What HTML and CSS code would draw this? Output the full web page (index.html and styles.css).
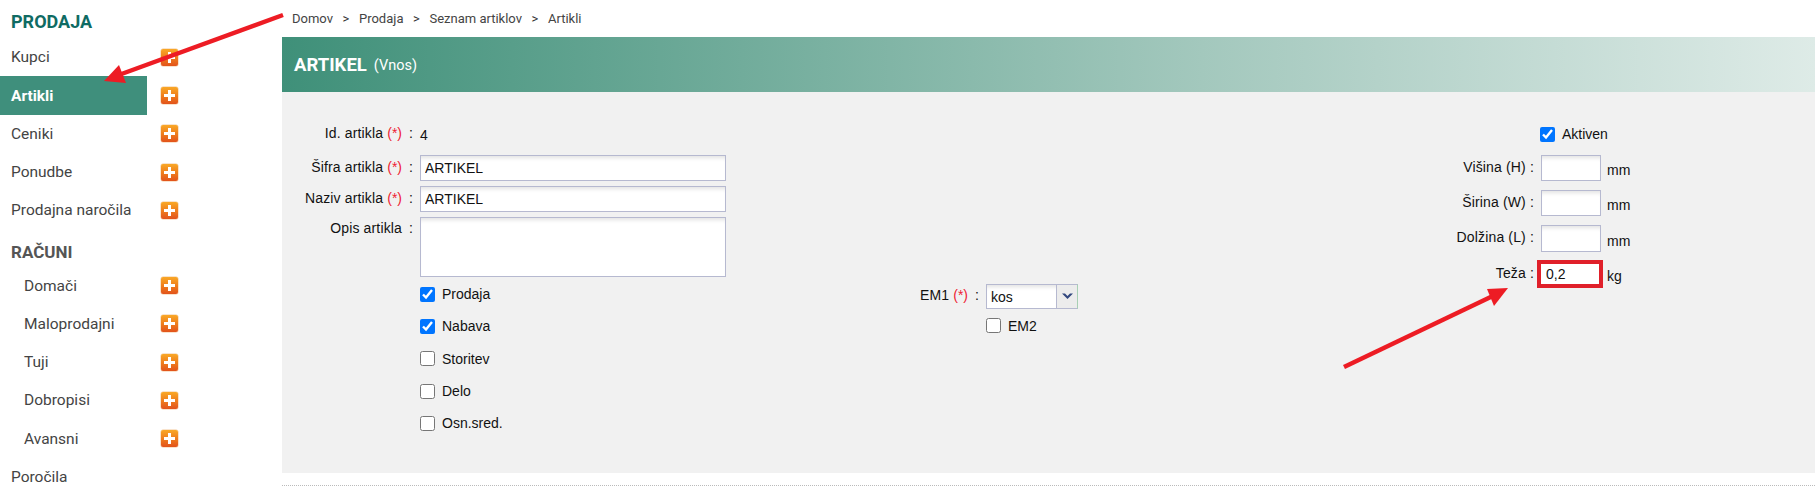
FILE: index.html
```html
<!DOCTYPE html>
<html lang="sl">
<head>
<meta charset="utf-8">
<title>Artikel</title>
<link rel="stylesheet" href="styles.css">
</head>
<body>
<div class="app">
  <aside class="sidebar">
    <h2 class="heading heading-main">PRODAJA</h2>
    <ul class="menu">
      <li class="item"><a class="link">Kupci</a><span class="plus"></span></li>
      <li class="item active"><a class="link">Artikli</a><span class="plus"></span></li>
      <li class="item"><a class="link">Ceniki</a><span class="plus"></span></li>
      <li class="item"><a class="link">Ponudbe</a><span class="plus"></span></li>
      <li class="item"><a class="link">Prodajna naročila</a><span class="plus"></span></li>
    </ul>
    <h2 class="heading heading-sub">RAČUNI</h2>
    <ul class="menu">
      <li class="item sub"><a class="link">Domači</a><span class="plus"></span></li>
      <li class="item sub"><a class="link">Maloprodajni</a><span class="plus"></span></li>
      <li class="item sub"><a class="link">Tuji</a><span class="plus"></span></li>
      <li class="item sub"><a class="link">Dobropisi</a><span class="plus"></span></li>
      <li class="item sub"><a class="link">Avansni</a><span class="plus"></span></li>
      <li class="item"><a class="link">Poročila</a></li>
    </ul>
  </aside>
  <main class="main">
    <nav class="crumbs"><span>Domov</span><span class="sep">&gt;</span><span>Prodaja</span><span class="sep">&gt;</span><span>Seznam artiklov</span><span class="sep">&gt;</span><span>Artikli</span></nav>
    <header class="title"><strong>ARTIKEL</strong><small>(Vnos)</small></header>
    <form class="panel">
      <div class="col col-left">
        <div class="row row-id"><span class="lbl">Id. artikla <em>(*)</em></span><span class="colon">:</span><span class="value">4</span></div>
        <div class="row"><span class="lbl">Šifra artikla <em>(*)</em></span><span class="colon">:</span><input class="input wide" type="text" value="ARTIKEL"></div>
        <div class="row"><span class="lbl">Naziv artikla <em>(*)</em></span><span class="colon">:</span><input class="input wide" type="text" value="ARTIKEL"></div>
        <div class="row row-top"><span class="lbl">Opis artikla</span><span class="colon">:</span><textarea class="input wide area"></textarea></div>
        <div class="checks">
          <label class="check"><input type="checkbox" checked>Prodaja</label>
          <label class="check"><input type="checkbox" checked>Nabava</label>
          <label class="check"><input type="checkbox">Storitev</label>
          <label class="check"><input type="checkbox">Delo</label>
          <label class="check"><input type="checkbox">Osn.sred.</label>
        </div>
      </div>
      <div class="col col-mid">
        <div class="row"><span class="lbl">EM1 <em>(*)</em></span><span class="colon">:</span>
          <span class="combo"><span class="combo-value">kos</span><span class="combo-btn"><svg width="13" height="8" viewBox="0 0 13 8"><path d="M1 1.5h3l2.500 2.500 2.500-2.500h3L6.500 7z" fill="#33487f"/></svg></span></span>
        </div>
        <label class="check check-em"><input type="checkbox">EM2</label>
      </div>
      <div class="col col-right">
        <label class="check check-active"><input type="checkbox" checked>Aktiven</label>
        <div class="dim"><span class="dim-lbl">Višina (H) :</span><input class="input small" type="text"><span class="unit">mm</span></div>
        <div class="dim"><span class="dim-lbl">Širina (W) :</span><input class="input small" type="text"><span class="unit">mm</span></div>
        <div class="dim dim-l"><span class="dim-lbl">Dolžina (L) :</span><input class="input small tall" type="text"><span class="unit">mm</span></div>
        <div class="dim dim-w"><span class="dim-lbl">Teža :</span><input class="marked" type="text" value="0,2"><span class="unit">kg</span></div>
      </div>
    </form>
    <div class="rule"></div>
  </main>
  <svg class="arrows" width="1815" height="494" viewBox="0 0 1815 494" aria-hidden="true">
    <g fill="#ed1c24" stroke="#ed1c24">
      <path d="M283 15L116 76" stroke-width="4.500" fill="none"/>
      <path d="M104 81l15-16 7 18z" stroke="none"/>
      <path d="M1344 367L1497 294" stroke-width="4.500" fill="none"/>
      <path d="M1508 288l-21 1 7 17z" stroke="none"/>
    </g>
  </svg>
</div>
</body>
</html>
```

FILE: styles.css
```css
* { box-sizing: border-box; }
html, body { margin: 0; padding: 0; height: 494px; overflow: hidden; background: #fff; }
.app { position: relative; display: flex; height: 494px; overflow: hidden; }

.sidebar { width: 282px; flex: none; font-family: Roboto, sans-serif; font-size: 15.500px; color: #444; }
.heading { margin: 0; font-weight: 700; padding-left: 11px; }
.heading-main { height: 38.2px; padding-top: 12px; line-height: 19px; color: #0f6b63; font-size: 18px; }
.heading-sub { height: 37px; padding-top: 14px; line-height: 19px; color: #555; font-size: 17px; }
.menu { list-style: none; margin: 0; padding: 0; }
.item { height: 38.25px; display: flex; align-items: center; }
.link { width: 147px; height: 100%; display: flex; align-items: center; padding-left: 11px; flex: none; }
.item.sub .link { padding-left: 24px; }
.item.active .link { background: #3f8f7c; color: #fff; font-weight: 700; }
.plus { position: relative; width: 17px; height: 17px; margin-left: 14px; border-radius: 2px; background: linear-gradient(#f9a826, #ee7a1c 55%, #e2531b); box-shadow: 0 0 0 0.5px #f3c79a; }
.plus::before, .plus::after { content: ""; position: absolute; background: #fff; }
.plus::before { left: 3px; right: 3px; top: 7px; height: 3px; }
.plus::after { top: 3px; bottom: 3px; left: 7px; width: 3px; }

.main { flex: 1; min-width: 0; }
.crumbs { height: 37px; padding: 10px 0 0 10px; display: flex; font-family: Roboto, sans-serif; font-size: 13px; line-height: 17px; color: #444; }
.sep { width: 26px; text-align: center; color: #333; }
.title { height: 55px; padding-left: 12px; display: flex; align-items: center; gap: 7px; color: #fff; font-family: Roboto, sans-serif; background: linear-gradient(to right, #3f9079, #a3c8bd 60%, #deebe7); }
.title strong { font-size: 18.500px; font-weight: 700; }
.title small { font-size: 14.500px; padding-top: 2px; }

.panel { height: 381px; background: #f1f1f1; display: flex; padding-top: 29px; font-family: "Liberation Sans", Arial, sans-serif; font-size: 14px; color: #111; }
.col { display: flex; flex-direction: column; }
.col-left { width: 566px; }
.col-mid { width: 230px; padding-top: 162px; }
.col-right { width: 200px; margin-left: 362px; padding-left: 0; }

.row { display: flex; align-items: center; height: 26px; margin-bottom: 5px; }
.row-id { margin-bottom: 8px; }
.row-top { height: 60px; align-items: flex-start; }
.lbl { width: 120px; flex: none; text-align: right; padding-bottom: 3px; letter-spacing: 0.15px; }
.row-top .lbl, .row-top .colon { padding-top: 3px; padding-bottom: 0; }
.lbl em { font-style: normal; color: #ee2233; letter-spacing: 0; }
.colon { width: 18px; flex: none; text-align: center; padding-bottom: 3px; }
.value { padding-top: 1px; }

.input { display: block; height: 26px; border: 1px solid #b6b9d0; padding: 0 4px; margin: 0; border-radius: 0; background: #fff; box-shadow: inset 0 5px 4px -3px #e2e2e2; font: 14px "Liberation Sans", Arial, sans-serif; color: #111; outline: none; resize: none; }
.wide { width: 306px; }
.area { height: 60px; }
.small { width: 60px; }
.tall { height: 27px; }

.checks { display: flex; flex-direction: column; padding-left: 138px; margin-top: -4px; }
.check { display: flex; align-items: center; height: 32.300px; }
.check input { width: 15px; height: 15px; margin: 0 7px 0 0; flex: none; }
.check-em { margin-left: 138px; margin-top: -3px; height: 32px; padding-bottom: 3px; }
.check-active { height: 26px; margin-left: 100px; margin-bottom: 8px; }

.combo { display: flex; width: 92px; height: 25px; border: 1px solid #b6b9d0; border-right-color: #a8d0b4; background: #fff; box-shadow: inset 0 5px 4px -3px #e2e2e2; }
.combo-value { flex: 1; padding: 4px 0 0 4px; }
.combo-btn { width: 21px; display: flex; align-items: center; justify-content: center; border-left: 1px solid #b6b9d0; background: #ececec; }

.dim { display: flex; align-items: center; height: 26px; margin-bottom: 9px; }
.dim-l { height: 27px; margin-bottom: 8px; }
.dim-w { height: 28px; }
.dim-lbl { width: 94px; flex: none; margin-right: 7px; text-align: right; padding-bottom: 3px; letter-spacing: 0.15px; }
.unit { margin-left: 6px; padding-top: 4px; }
.marked { width: 58px; height: 20px; margin: 0 2px 0 0; padding: 0 5px; border: 0; outline: 4px solid #e0202a; background: #fff; font: 14px "Liberation Sans", Arial, sans-serif; color: #111; }

.rule { margin-top: 12px; border-top: 1px dotted #bbb; }
.arrows { position: absolute; left: 0; top: 0; pointer-events: none; }
```
